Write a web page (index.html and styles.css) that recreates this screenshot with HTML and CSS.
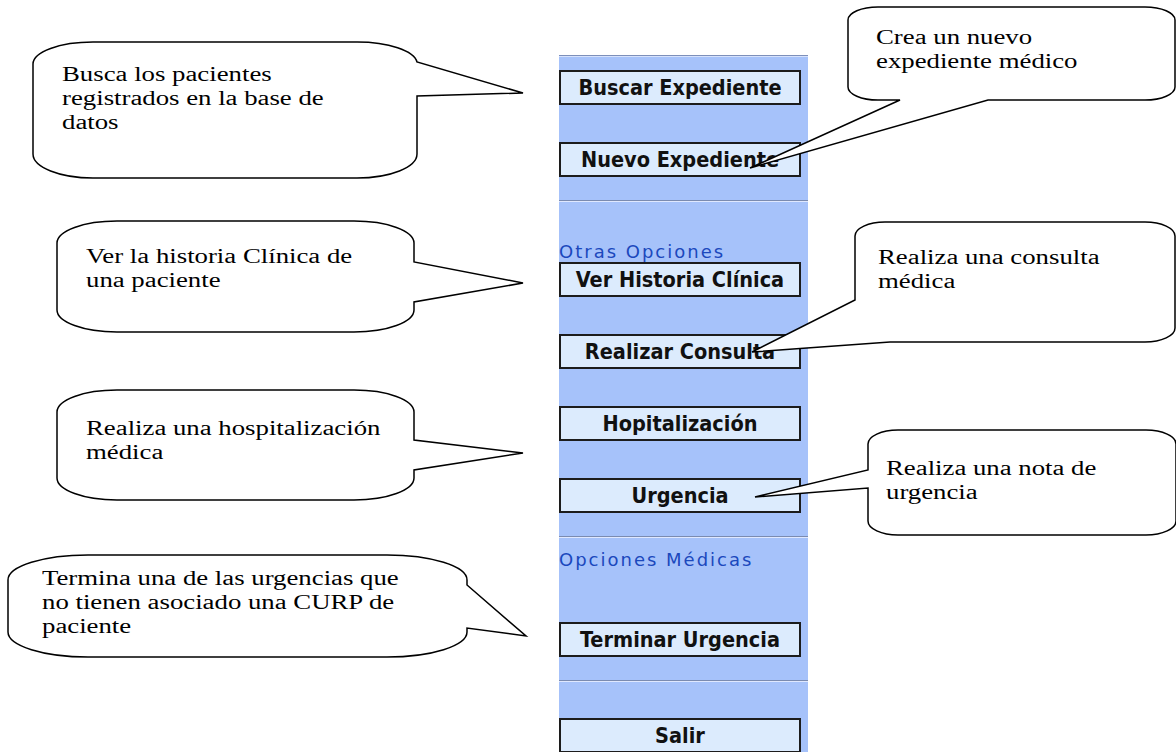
FILE: index.html
```html
<!DOCTYPE html>
<html lang="es">
<head>
  <meta charset="UTF-8" />
  <meta name="viewport" content="width=device-width, initial-scale=1.0" />
  <title>Menú de expedientes</title>
  <link rel="stylesheet" href="styles.css">
</head>
<body>
  <div class="page">
    <nav class="menu">
      <button class="menu-btn first">Buscar Expediente</button>
      <button class="menu-btn">Nuevo Expediente</button>
      <hr class="sep">
      <div class="menu-title otras">Otras Opciones</div>
      <button class="menu-btn flush">Ver Historia Clínica</button>
      <button class="menu-btn">Realizar Consulta</button>
      <button class="menu-btn">Hopitalización</button>
      <button class="menu-btn">Urgencia</button>
      <hr class="sep">
      <div class="menu-title medicas">Opciones Médicas</div>
      <button class="menu-btn after-title">Terminar Urgencia</button>
      <hr class="sep">
      <button class="menu-btn salir">Salir</button>
    </nav>

    <!-- callout balloons -->
    <svg class="balloons" width="1176" height="752" viewBox="0 0 1176 752">
      <path d="M 93 42 H 357 A 60 22 0 0 1 417 62 L 523 93 L 417 96 V 154 A 60 24 0 0 1 357 178 H 93 A 60 24 0 0 1 33 154 V 64 A 60 22 0 0 1 93 42 Z" />
      <path d="M 117 221 H 354 A 60 22 0 0 1 414 243 V 262 L 523 283 L 414 302 V 310 A 60 22 0 0 1 354 332 H 117 A 60 22 0 0 1 57 310 V 243 A 60 22 0 0 1 117 221 Z" />
      <path d="M 117 390 H 354 A 60 22 0 0 1 414 412 V 440 L 523 453 L 414 470 V 478 A 60 22 0 0 1 354 500 H 117 A 60 22 0 0 1 57 478 V 412 A 60 22 0 0 1 117 390 Z" />
      <path d="M 88 555 H 387 A 80 25 0 0 1 467 580 V 585 L 526 636 L 467 628 V 632 A 80 25 0 0 1 387 657 H 88 A 80 25 0 0 1 8 632 V 580 A 80 25 0 0 1 88 555 Z" />
      <path d="M 878 7 H 1145 A 30 13 0 0 1 1175 20 V 87 A 30 13 0 0 1 1145 100 H 988 L 750 168 L 900 100 H 878 A 30 13 0 0 1 848 87 V 20 A 30 13 0 0 1 878 7 Z" />
      <path d="M 885 222 H 1145 A 30 14 0 0 1 1175 236 V 328 A 30 14 0 0 1 1145 342 H 890 L 752 352 L 855 300 V 236 A 30 14 0 0 1 885 222 Z" />
      <path d="M 898 430 H 1146 A 30 14 0 0 1 1176 444 V 521 A 30 14 0 0 1 1146 535 H 898 A 30 14 0 0 1 868 521 V 488 L 755 497 L 868 470 V 444 A 30 14 0 0 1 898 430 Z" />
    </svg>

    <p class="note n-buscar">Busca los pacientes<br>registrados en la base de<br>datos</p>
    <p class="note n-historia">Ver la historia Clínica de<br>una paciente</p>
    <p class="note n-hospital">Realiza una hospitalización<br>médica</p>
    <p class="note n-termina">Termina una de las urgencias que<br>no tienen asociado una CURP de<br>paciente</p>
    <p class="note n-nuevo">Crea un nuevo<br>expediente médico</p>
    <p class="note n-consulta">Realiza una consulta<br>médica</p>
    <p class="note n-urgencia">Realiza una nota de<br>urgencia</p>
  </div>
</body>
</html>
```

FILE: styles.css
```css
body {
  margin: 0;
  background: #fff;
}
.page {
  position: relative;
  width: 1176px;
  height: 752px;
  overflow: hidden;
  box-sizing: border-box;
  padding: 55px 0 0 559px;
}
.menu {
  width: 249px;
  height: 697px;
  background: #a6c2fa;
  border-top: 1px solid #7d8fba;
  box-shadow: inset 0 1px 0 #d6e2fd;
  overflow: hidden;
}
.menu-btn {
  display: block;
  box-sizing: border-box;
  width: 242px;
  height: 35px;
  margin: 37px 0 0;
  padding: 0;
  border: 2px solid #1c1c1c;
  background: #dcebfd;
  color: #111;
  font-family: "DejaVu Sans Condensed", "DejaVu Sans", sans-serif;
  font-stretch: condensed;
  font-weight: bold;
  font-size: 21.5px;
  text-align: center;
}
.menu-btn.first {
  margin-top: 14px;
}
.menu-btn.flush {
  margin-top: 0;
}
.menu-btn.after-title {
  margin-top: 52px;
}
.menu-btn.salir {
  margin-top: 36px;
}
.sep {
  height: 0;
  margin: 23px 0 0;
  border: 0;
  border-top: 1px solid #7b8bb0;
  border-bottom: 1px solid #dfe8ff;
}
.menu-title {
  height: 20px;
  font-family: "DejaVu Sans", sans-serif;
  font-size: 18px;
  line-height: 20px;
  letter-spacing: 2px;
  color: #1b48bd;
}
.menu-title.otras {
  margin-top: 40px;
}
.menu-title.medicas {
  margin-top: 12px;
}
.balloons {
  position: absolute;
  top: 0;
  left: 0;
  pointer-events: none;
}
.balloons path {
  fill: #fff;
  stroke: #000;
  stroke-width: 1.5;
  stroke-linejoin: miter;
}
.note {
  position: absolute;
  margin: 0;
  font-family: "Liberation Serif", "Times New Roman", serif;
  font-size: 21.6px;
  line-height: 24px;
  color: #000;
  white-space: nowrap;
  transform: scaleX(1.24);
  transform-origin: 0 0;
}
.n-buscar { left: 62px; top: 62px; }
.n-historia { left: 86px; top: 244px; }
.n-hospital { left: 86px; top: 416px; }
.n-termina { left: 42px; top: 566px; }
.n-nuevo { left: 876px; top: 25px; }
.n-consulta { left: 878px; top: 245px; }
.n-urgencia { left: 886px; top: 456px; }
```
